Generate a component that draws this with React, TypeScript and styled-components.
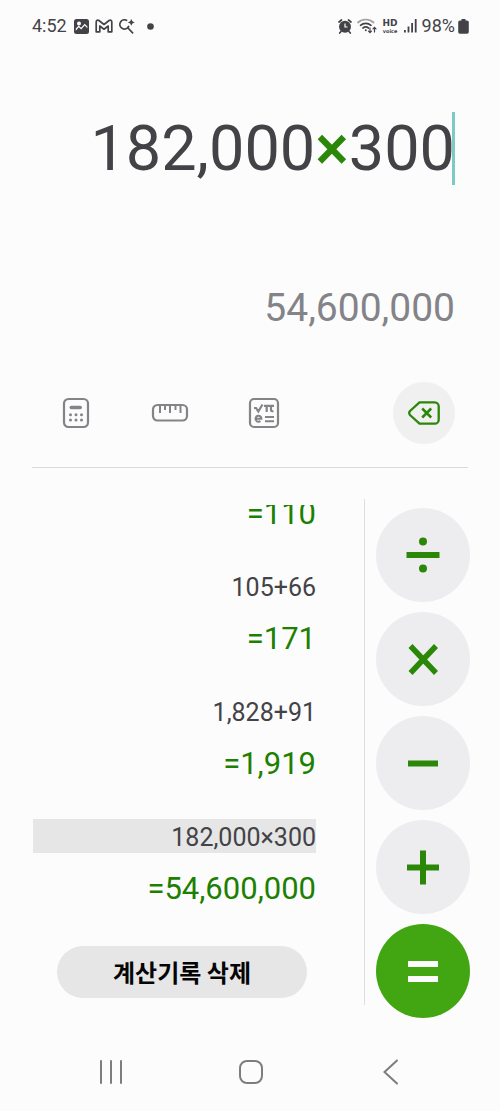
import React from "react";
import styled, { createGlobalStyle } from "styled-components";

const GREEN = "#2b8707";
const TEXT_GREEN = "#1c8000";
const INK = "#434347";
const GREY = "#838388";

const GlobalStyle = createGlobalStyle`
  *, *::before, *::after { box-sizing: border-box; }
  body {
    margin: 0;
    background: #fcfcfd;
    color: ${INK};
    font-family: Roboto, "Noto Sans CJK KR", sans-serif;
  }
  button {
    margin: 0;
    padding: 0;
    border: 0;
    background: none;
    color: inherit;
    font: inherit;
    cursor: pointer;
  }
  svg { display: block; flex: none; }
`;

const Screen = styled.div`
  display: flex;
  flex-direction: column;
  min-height: 100vh;
`;

const StatusBar = styled.header`
  display: flex;
  align-items: center;
  justify-content: space-between;
  height: 52px;
  padding: 0 31px 0 32px;
  font-size: 18px;
  line-height: 22px;
`;

const StatusGroup = styled.div<{ $gap: number }>`
  display: flex;
  align-items: center;
  gap: ${(p) => p.$gap}px;
`;

const Clock = styled.time`
  margin-right: 1px;
`;

const DotSlot = styled.span`
  padding-left: 6px;
`;

const VoiceBadge = styled.span`
  display: flex;
  flex-direction: column;
  align-items: center;
  width: 17px;
  font-family: "DejaVu Sans", sans-serif;
  font-weight: 700;
`;

const BadgeLine = styled.span<{ $size: number; $height: number }>`
  font-size: ${(p) => p.$size}px;
  line-height: ${(p) => p.$height}px;
`;

const BatteryLevel = styled.span`
  display: flex;
  align-items: center;
  gap: 3px;
`;

const Display = styled.section`
  display: flex;
  flex-direction: column;
  align-items: flex-end;
  gap: 100px;
  padding: 60px 45px 0 32px;
`;

const Expression = styled.div`
  display: flex;
  height: 73px;
  font-size: 63px;
  line-height: 74px;
  white-space: nowrap;
`;

const Caret = styled.span`
  width: 3px;
  margin-left: -3px;
  background: #7bcbc5;
`;

const Operator = styled.span`
  color: ${GREEN};
  font-weight: 500;
`;

const Result = styled.output`
  color: ${GREY};
  font-size: 39px;
  line-height: 46px;
`;

const ToolRow = styled.nav`
  display: flex;
  align-items: center;
  margin-top: 51px;
  padding: 0 45px 0 29px;
`;

const ToolButton = styled.button`
  display: flex;
  align-items: center;
  justify-content: center;
  width: 94px;
  height: 62px;
  color: ${GREY};
`;

const BackspaceButton = styled.button`
  display: flex;
  align-items: center;
  justify-content: center;
  width: 62px;
  height: 62px;
  margin-left: auto;
  border-radius: 50%;
  background: #f0f0f1;
  color: ${GREEN};
`;

const Divider = styled.hr`
  width: auto;
  height: 1px;
  margin: 23px 32px 0;
  border: 0;
  background: #dadadc;
`;

const Body = styled.main`
  display: flex;
  align-items: flex-start;
  padding: 31px 30px 0 0;
`;

const HistoryPanel = styled.section`
  display: flex;
  flex: 1;
  flex-direction: column;
  align-items: center;
  min-width: 0;
  padding: 6px 0 7px;
  border-right: 1px solid #dedee0;
`;

const HistoryList = styled.ol`
  display: flex;
  flex-direction: column;
  justify-content: flex-end;
  gap: 36px;
  width: 100%;
  height: 403px;
  margin: 0;
  padding: 0 48px 0 33px;
  overflow: hidden;
  list-style: none;
  text-align: right;
`;

const Entry = styled.li`
  display: flex;
  flex: none;
  flex-direction: column;
  gap: 17px;
`;

const EntryExpression = styled.div<{ $selected: boolean }>`
  padding-top: 3px;
  background: ${(p) => (p.$selected ? "#e6e6e6" : "transparent")};
  font-size: 25px;
  line-height: 31px;
`;

const EntryResult = styled.div`
  color: ${TEXT_GREEN};
  font-size: 31px;
  line-height: 38px;
`;

const ClearButton = styled.button`
  width: 250px;
  height: 52px;
  margin: 38px 0 0;
  border-radius: 26px;
  background: #e6e6e6;
  color: #050505;
  font-family: "Noto Sans CJK KR", sans-serif;
  font-size: 24px;
  font-weight: 700;
  line-height: 52px;
`;

const Keypad = styled.div`
  display: flex;
  flex-direction: column;
  gap: 10px;
  padding: 9px 0 0 11px;
`;

const Key = styled.button<{ $primary?: boolean }>`
  display: flex;
  align-items: center;
  justify-content: center;
  width: 94px;
  height: 94px;
  border-radius: 50%;
  background: ${(p) => (p.$primary ? "#42a512" : "#ededef")};
  color: ${(p) => (p.$primary ? "#fcfcfc" : GREEN)};
`;

const SystemNav = styled.nav`
  display: flex;
  align-items: center;
  justify-content: space-between;
  padding: 30px 83px 14px 85px;
  color: #7d7d7d;
`;

const NavButton = styled.button`
  display: flex;
  align-items: center;
  justify-content: center;
  width: 52px;
  height: 48px;
`;

const PictureIcon = () => (
  <svg width="15" height="15" viewBox="0 0 15 15" aria-hidden="true">
    <path
      fill="currentColor"
      fillRule="evenodd"
      d="M2.500 0h10A2.500 2.500 0 0 1 15 2.500v10a2.500 2.500 0 0 1-2.500 2.500h-10A2.500 2.500 0 0 1 0 12.500v-10A2.500 2.500 0 0 1 2.500 0zM5 2.500a2 2 0 1 0 0 4A2 2 0 0 0 5 2.500zM1.800 11.700L4.800 8.300l2.400 2.200 3.500-4 2.700 2.800V7.500l-2.700-2.700-3.600 4-2.300-2.200-3 3z"
    />
  </svg>
);

const MailIcon = () => (
  <svg width="18" height="14" viewBox="0 0 18 14" fill="none" stroke="currentColor" strokeWidth="1.700" strokeLinejoin="round" aria-hidden="true">
    <path d="M1.200 12.800V3C1.200 1.200 2.800.700 3.900 1.500L9 5.500l5.100-4C15.200.700 16.800 1.200 16.800 3v9.800h-3.600V7L9 10.200 4.800 7v5.800z" />
  </svg>
);

const SearchIcon = () => (
  <svg width="16" height="15" viewBox="0 0 16 15" fill="none" stroke="currentColor" strokeWidth="1.700" strokeLinecap="round" aria-hidden="true">
    <path d="M7.500 1.300A4.600 4.600 0 1 0 9.600 7.500M9 9l4.600 4.800" />
    <path d="M12.300 0l1.100 2.300 2.300 1.100-2.300 1.100-1.100 2.300-1.100-2.300-2.300-1.100 2.300-1.100z" fill="currentColor" stroke="none" />
  </svg>
);

const DotIcon = () => (
  <svg width="7" height="7" viewBox="0 0 7 7" aria-hidden="true">
    <circle cx="3.500" cy="3.500" r="3.300" fill="currentColor" />
  </svg>
);

const AlarmIcon = () => (
  <svg width="14" height="15" viewBox="0 0 14 15" aria-hidden="true">
    <circle cx="7" cy="7.700" r="6" fill="currentColor" />
    <path d="M1 3L3.500 1M13 3L10.500 1M3 12.500l-1.300 1.500M11 12.500l1.300 1.500" stroke="currentColor" strokeWidth="1.700" strokeLinecap="round" />
    <path d="M7 4.500v3.500h2.500" fill="none" stroke="#fcfcfd" strokeWidth="1.200" />
  </svg>
);

const WifiIcon = () => (
  <svg width="20" height="16" viewBox="0 0 20 16" fill="none" stroke="currentColor" strokeWidth="1.700" strokeLinecap="round" aria-hidden="true">
    <path d="M1 4.500a11.500 11.500 0 0 1 15.500 0" opacity=".5" />
    <path d="M3.500 7.300a8 8 0 0 1 10.500 0M6 10a4.500 4.500 0 0 1 5.500 0" />
    <circle cx="8.800" cy="12.300" r="1" fill="currentColor" stroke="none" />
    <path d="M13 10v4.500M11.500 13.200l1.500 1.500 1.500-1.500M17.500 14V9.500M16 10.800l1.500-1.500 1.500 1.500" strokeWidth="1.200" />
  </svg>
);

const SignalIcon = () => (
  <svg width="13" height="14" viewBox="0 0 13 14" fill="currentColor" aria-hidden="true">
    <rect x="0" y="11" width="1.800" height="2.500" />
    <rect x="3.600" y="7.500" width="1.800" height="6" />
    <rect x="7.200" y="4" width="1.800" height="9.500" />
    <rect x="10.800" y="0" width="1.800" height="13.500" />
  </svg>
);

const BatteryIcon = () => (
  <svg width="11" height="15" viewBox="0 0 11 15" fill="currentColor" aria-hidden="true">
    <path d="M3.500 0h4v1.500H9A1.800 1.800 0 0 1 10.800 3.300v9.700A1.800 1.800 0 0 1 9 14.800H2A1.800 1.800 0 0 1 .2 13V3.300A1.800 1.800 0 0 1 2 1.500h1.500z" />
  </svg>
);

const CalculatorIcon = () => (
  <svg width="28" height="32" viewBox="0 0 28 32" fill="none" stroke="currentColor" aria-hidden="true">
    <rect x="2" y="2" width="24" height="28" rx="4.500" strokeWidth="2.200" />
    <rect x="7.500" y="8.700" width="12.500" height="3.600" rx="1.800" fill="currentColor" stroke="none" />
    <g fill="currentColor" stroke="none">
      {[17.7, 23].map((y) =>
        [8.5, 14, 19.5].map((x) => <circle key={`${x}-${y}`} cx={x} cy={y} r="1.500" />)
      )}
    </g>
  </svg>
);

const RulerIcon = () => (
  <svg width="38" height="20" viewBox="0 0 38 20" fill="none" stroke="currentColor" strokeWidth="2.200" aria-hidden="true">
    <rect x="2" y="2" width="34" height="15.500" rx="4.500" />
    <path d="M9 2v8M14 2v5M19 2v8M24.500 2v5M29.500 2v8" strokeWidth="2" />
  </svg>
);

const ScientificIcon = () => (
  <svg width="32" height="32" viewBox="0 0 32 32" fill="none" stroke="currentColor" strokeWidth="2.200" aria-hidden="true">
    <rect x="2" y="2" width="28" height="28" rx="4" />
    <path d="M6 11h2l2.300 3.500L14.500 7.500M16 8.800h10M18.700 9v6M23 9v4q0 1.500 2.400 1.200" />
    <path d="M7.800 21.700h5.600a2.900 3 0 1 0-1 2.300M17 20h9M17 24.300h9" strokeWidth="2" />
  </svg>
);

const BackspaceIcon = () => (
  <svg width="32" height="24" viewBox="0 0 32 24" fill="none" stroke="currentColor" strokeWidth="2.300" strokeLinejoin="round" aria-hidden="true">
    <path d="M11.500 1.300H26.700a4 4 0 0 1 4 4v13.400a4 4 0 0 1-4 4H11.500L2 14q-1.600-2 0-4z" />
    <path d="M14.200 7.500l9 9M23.200 7.500l-9 9" strokeWidth="2.500" />
  </svg>
);

const OPERATORS = [
  {
    label: "나누기",
    mark: (
      <>
        <path d="M3.500 20h33" />
        <circle cx="20" cy="6.500" r="4" fill="currentColor" stroke="none" />
        <circle cx="20" cy="33.500" r="4" fill="currentColor" stroke="none" />
      </>
    ),
  },
  { label: "곱하기", mark: <path d="M7.500 7l25.500 27M33 7l-25.500 27" strokeWidth="5.500" /> },
  { label: "빼기", mark: <path d="M5 20.500h30" /> },
  { label: "더하기", mark: <path d="M4 20.500h32M20 3.500v34" /> },
  { label: "계산", primary: true, mark: <path d="M5 13h30M5 28h30" /> },
];

const HISTORY = [
  { result: "=110" },
  { expression: "105+66", result: "=171" },
  { expression: "1,828+91", result: "=1,919" },
  { expression: "182,000×300", result: "=54,600,000", selected: true },
];

export default function App() {
  return (
    <Screen>
      <GlobalStyle />
      <StatusBar>
        <StatusGroup $gap={6}>
          <Clock>4:52</Clock>
          <PictureIcon />
          <MailIcon />
          <SearchIcon />
          <DotSlot>
            <DotIcon />
          </DotSlot>
        </StatusGroup>
        <StatusGroup $gap={5}>
          <AlarmIcon />
          <WifiIcon />
          <VoiceBadge>
            <BadgeLine $size={9} $height={10}>HD</BadgeLine>
            <BadgeLine $size={5} $height={6}>voice</BadgeLine>
          </VoiceBadge>
          <SignalIcon />
          <BatteryLevel>
            98%
            <BatteryIcon />
          </BatteryLevel>
        </StatusGroup>
      </StatusBar>

      <Display>
        <Expression>
          <span>
            182,000<Operator>×</Operator>300
          </span>
          <Caret />
        </Expression>
        <Result>54,600,000</Result>
      </Display>

      <ToolRow>
        <ToolButton aria-label="계산기"><CalculatorIcon /></ToolButton>
        <ToolButton aria-label="단위 계산기"><RulerIcon /></ToolButton>
        <ToolButton aria-label="공학용 계산기"><ScientificIcon /></ToolButton>
        <BackspaceButton aria-label="지우기"><BackspaceIcon /></BackspaceButton>
      </ToolRow>
      <Divider />

      <Body>
        <HistoryPanel>
          <HistoryList>
            {HISTORY.map((item) => (
              <Entry key={item.result}>
                {item.expression && (
                  <EntryExpression $selected={!!item.selected}>{item.expression}</EntryExpression>
                )}
                <EntryResult>{item.result}</EntryResult>
              </Entry>
            ))}
          </HistoryList>
          <ClearButton>계산기록 삭제</ClearButton>
        </HistoryPanel>
        <Keypad>
          {OPERATORS.map((op) => (
            <Key key={op.label} $primary={op.primary} aria-label={op.label}>
              <svg width="40" height="40" viewBox="0 0 40 40" fill="none" stroke="currentColor" strokeWidth="6">
                {op.mark}
              </svg>
            </Key>
          ))}
        </Keypad>
      </Body>

      <SystemNav>
        <NavButton aria-label="최근 앱">
          <svg width="26" height="26" viewBox="0 0 26 26" stroke="currentColor" strokeWidth="2" strokeLinecap="round">
            <path d="M3 2v22M13 2v22M23 2v22" />
          </svg>
        </NavButton>
        <NavButton aria-label="홈">
          <svg width="26" height="26" viewBox="0 0 26 26" fill="none" stroke="currentColor" strokeWidth="2">
            <rect x="2" y="2" width="22" height="22" rx="7" />
          </svg>
        </NavButton>
        <NavButton aria-label="뒤로">
          <svg width="26" height="26" viewBox="0 0 26 26" fill="none" stroke="currentColor" strokeWidth="2" strokeLinecap="round">
            <path d="M19 1.500L6.500 13 19 24.500" />
          </svg>
        </NavButton>
      </SystemNav>
    </Screen>
  );
}
